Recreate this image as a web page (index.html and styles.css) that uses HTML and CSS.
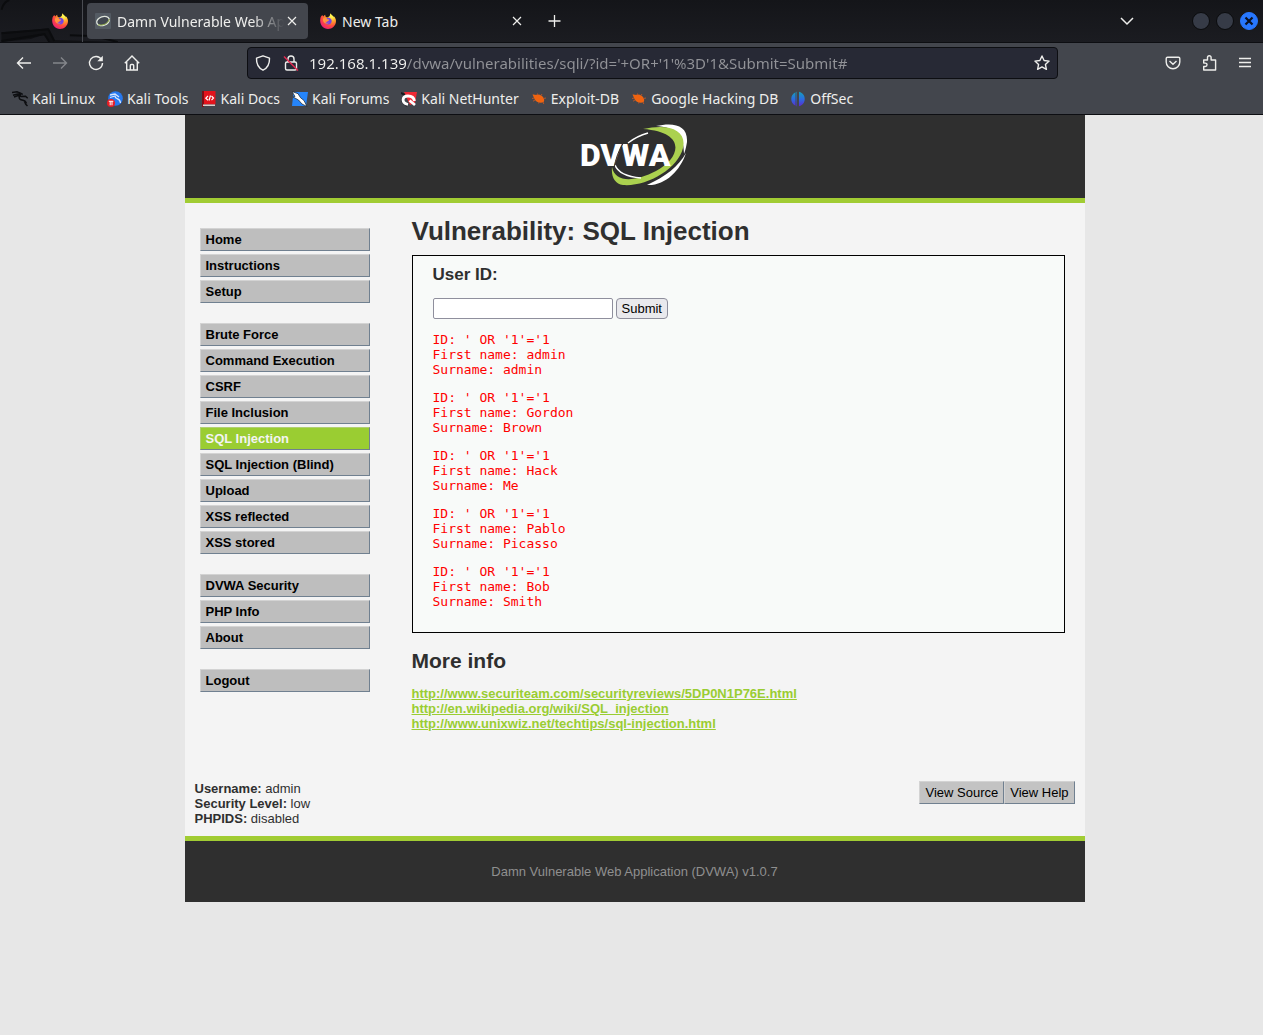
FILE: index.html
```html
<!DOCTYPE html>
<html lang="en">
<head>
<meta charset="utf-8">
<title>Damn Vulnerable Web App (DVWA) v1.0.7 :: Vulnerability: SQL Injection</title>
<link rel="stylesheet" href="styles.css">
</head>
<body>
<svg class="defs" aria-hidden="true">
  <defs>
    <radialGradient id="flame" cx="0.75" cy="0.15" r="1">
      <stop offset="0.1" stop-color="#fff44f"/><stop offset="0.35" stop-color="#ffa62b"/><stop offset="0.65" stop-color="#ff4a3d"/><stop offset="1" stop-color="#e31587"/>
    </radialGradient>
    <linearGradient id="offsec" x1="0" y1="0" x2="0" y2="1">
      <stop offset="0" stop-color="#159fb8"/><stop offset="0.5" stop-color="#2a6de0"/><stop offset="1" stop-color="#5b2bd0"/>
    </linearGradient>
    <symbol id="firefox" viewBox="0 0 16 16">
      <path fill="url(#flame)" d="M15.3 5.2c-.4-.9-1.100-1.700-1.700-2 .4.700.5 1.300.5 1.300C13.200 2.200 11.200 2 10.300.2c-.4 1-.2 1.900-.6 2.700-.8.5-1.500 1-1.900 1.500-.8-.2-1.600-.1-1.600-.1-.8-.7-1.100-1.700-1-2.600-.8.400-1.500 1.100-1.900 1.700-.5-.2-.8-.9-.9-1.400C1.300 2.700.5 4 .3 5.900-.6 11 2.800 16 8 16c4.300 0 8-3.400 8-8 0-1-.3-2-.7-2.800z"/>
      <path fill="#7543e5" d="M8.200 4.700c2 0 3.500 1.500 3.500 3.400s-1.500 3.400-3.500 3.400c-1.900 0-3.400-1.300-3.600-3 1.400 1 2.900.6 3.400-.4.700-.4 1.200-.5 1.100-1-.3-.5-1.200-.2-1.900-.6C6.400 6 6.600 5 8.200 4.700z"/>
      <path fill="#ff9640" d="M3 5.500c1-.8 2.500-.7 3.300-.1.300.7 1 .9 2.100.9.500.1-.1.900-.9 1.200-.5.900-1.300 1.500-2.600 1.100 1 1.400 3 1.700 4.400.7-1.200 1.700-4.300 1.600-5.600-.3C3 8 2.700 6.700 3 5.500z"/>
    </symbol>
    <symbol id="close" viewBox="0 0 10 10"><path d="M1 1l8 8M9 1l-8 8" stroke="currentColor" stroke-width="1.200" fill="none"/></symbol>
    <symbol id="dragon" viewBox="0 0 16 16">
      <path fill="none" stroke="currentColor" stroke-width="1.500" d="M0 1.500l5-.7 3.500 1.400 2.200 1.300M1 4.200l4.500-1.200 3.500.7M2 6l4-1.500 3 .8M7.500 4.500c-1 3.300.5 4.300 3.500 4.700 2.500.4 3 1.500 3.400 3.300M8.500 5.500l5-.2 2.200 2M12.500 10.500l1.300 2.800 1.700 1.700"/>
    </symbol>
    <symbol id="bug" viewBox="0 0 16 16">
      <path fill="#ef6310" d="M1.500 3.500c2.500 0 3 .7 4.500.2 3-.5 6 1.300 7 4.300.3 1.500.2 2.500-.8 3.300C9 12.300 4.500 11 3.500 8z"/>
      <path fill="none" stroke="#b4562a" d="M6 4l.5-1.500M10 4.500L11 3M12.500 7.500l2.500-.5M12 11l.8 2M8 11l-.3 1.500M4 9l-2 1.200M3 7L1 7.500"/>
    </symbol>
  </defs>
</svg>

<header class="browser">
  <div class="tabbar">
    <svg class="tabbar-art" viewBox="0 0 130 43" aria-hidden="true">
      <path fill="#101114" d="M0 33l30-2 18-2 6 12 66 2H50l-6-8-14 5-30 3z"/>
      <path fill="none" stroke="#0b0c0e" stroke-width="2" d="M0 34l48-4 6 12M0 42l44-7 5 8M70 36l25 1 24 6M0 10Q2 2 8 0"/>
    </svg>
    <button class="pinned" aria-label="Firefox View"><svg class="icon"><use href="#firefox"/></svg></button>
    <div class="tab tab-active">
      <svg class="icon" viewBox="0 0 16 16"><rect width="16" height="16" rx="1" fill="#545b63"/><ellipse cx="8" cy="8" rx="6.500" ry="4.300" transform="rotate(-18 8 8)" fill="#41474f" stroke="#dfe5dc" stroke-width="1.300"/><path d="M3 12q9 1 11.500-6" fill="none" stroke="#8ca646"/></svg>
      <span class="tab-title">Damn Vulnerable Web App</span>
      <button class="tab-close" aria-label="Close tab"><svg><use href="#close"/></svg></button>
    </div>
    <div class="tab">
      <svg class="icon"><use href="#firefox"/></svg>
      <span class="tab-title">New Tab</span>
      <button class="tab-close" aria-label="Close tab"><svg><use href="#close"/></svg></button>
    </div>
    <button class="new-tab" aria-label="New tab"><svg class="icon" viewBox="0 0 16 16"><path d="M7.500 2v12M1.500 8h12" stroke="currentColor" stroke-width="1.300"/></svg></button>
    <div class="window-controls">
      <button class="list-tabs" aria-label="List all tabs"><svg class="icon" viewBox="0 0 16 16"><path d="M2 5l6 6 6-6" fill="none" stroke="currentColor" stroke-width="1.500"/></svg></button>
      <button class="dot" aria-label="Minimize"></button>
      <button class="dot" aria-label="Maximize"></button>
      <button class="dot dot-close" aria-label="Close"><svg viewBox="0 0 10 10"><path d="M1.500 1.500l7 7M8.500 1.500l-7 7" stroke="#0b1020" stroke-width="2.200"/></svg></button>
    </div>
  </div>

  <div class="toolbar">
    <nav class="tools" aria-label="Navigation">
      <button aria-label="Back"><svg class="icon" viewBox="0 0 16 16"><path d="M15 8H1.500M7 2.500L1.500 8 7 13.500" fill="none" stroke="currentColor" stroke-width="1.400"/></svg></button>
      <button class="disabled" aria-label="Forward"><svg class="icon" viewBox="0 0 16 16"><path d="M1 8h13.500M9 2.500L14.500 8 9 13.500" fill="none" stroke="currentColor" stroke-width="1.400"/></svg></button>
      <button aria-label="Reload"><svg class="icon" viewBox="0 0 16 16"><path d="M13.500 4.500A6.500 6.500 0 1 0 14.500 8" fill="none" stroke="currentColor" stroke-width="1.400"/><path d="M14.800.8v5.500H9.300z" fill="currentColor"/></svg></button>
      <button aria-label="Home"><svg class="icon" viewBox="0 0 16 16"><path d="M.8 8.200L8 1l7.200 7.200M2.700 7v8h10.600V7M6.300 15v-4.500q0-1 1-1h1.400q1 0 1 1V15" fill="none" stroke="currentColor" stroke-width="1.400"/></svg></button>
    </nav>
    <div class="urlbar">
      <svg class="icon" viewBox="0 0 16 16"><path d="M8 .8L14.500 3.200c.2 5-1.500 9.500-6.500 12C3 12.700 1.300 8.200 1.500 3.200z" fill="none" stroke="currentColor" stroke-width="1.400" stroke-linejoin="round"/></svg>
      <svg class="icon" viewBox="0 0 16 16"><path d="M5 7V4a3 3 0 0 1 6 0v3M4 7h8q1.500 0 1.500 1.500v5Q13.500 15 12 15H4q-1.500 0-1.500-1.500v-5Q2.500 7 4 7z" fill="none" stroke="currentColor" stroke-width="1.400"/><path d="M1 1.500l14 14" stroke="#e22850" stroke-width="1.500"/></svg>
      <input class="url" aria-label="Address" value="192.168.1.139/dvwa/vulnerabilities/sqli/?id='+OR+'1'%3D'1&amp;Submit=Submit#">
      <svg class="icon" viewBox="0 0 16 16"><path d="M8 1l2.100 4.500 5 .6-3.700 3.300 1 4.900L8 11.900l-4.400 2.400 1-4.900L.9 6.100l5-.6z" fill="none" stroke="currentColor" stroke-width="1.400" stroke-linejoin="round"/></svg>
    </div>
    <div class="tools">
      <button aria-label="Save to Pocket"><svg class="icon" viewBox="0 0 16 16"><path d="M2.500 2.200h11q1.300 0 1.300 1.300V7a6.800 6.800 0 0 1-13.600 0V3.500q0-1.300 1.300-1.300zM4.500 6L8 9.300 11.500 6" fill="none" stroke="currentColor" stroke-width="1.400"/></svg></button>
      <button aria-label="Extensions"><svg class="icon" viewBox="0 0 16 16"><path d="M2.700 5h3.800V2.500a1.800 1.800 0 0 1 3.600 0V5h4.500v10H2.700v-3.500h1.600a1.700 1.700 0 0 0 0-3.400H2.700z" fill="none" stroke="currentColor" stroke-width="1.400" stroke-linejoin="round"/></svg></button>
      <button aria-label="Menu"><svg class="icon" viewBox="0 0 16 16"><path d="M2 3.500h12M2 7.500h12M2 11.500h12" stroke="currentColor" stroke-width="1.300"/></svg></button>
    </div>
  </div>

  <nav class="bookmarks" aria-label="Bookmarks">
    <a href="#"><svg class="icon kali"><use href="#dragon"/></svg>Kali Linux</a>
    <a href="#"><svg class="icon" viewBox="0 0 16 16"><circle cx="8.500" cy="7.500" r="7.300" fill="#2678ef"/><path d="M3 4l5-1 4 3M3 6.500l5-1.500c0 4 5 1 5.500 7" fill="none" stroke="#d5e5ff" stroke-width="1.300"/><circle cx="4" cy="12" r="4" fill="#e81c24"/><path d="M1.800 10.300h4.500M3.200 10.300v4M5 10.300v4" stroke="#fff" fill="none"/></svg>Kali Tools</a>
    <a href="#"><svg class="icon" viewBox="0 0 16 16"><path fill="#7d0d14" d="M1 0h2v16H1z"/><path fill="#e3131c" d="M3 0h11.500v13.500H3z"/><path fill="#d7d0cc" d="M2 13.500h12v1.500H2z"/><path d="M7 5L4.800 7.200 7 9.200M10.500 5l2 2-2 2.200M9.500 4.500l-1.500 5" fill="none" stroke="#fff" stroke-width="1.200"/></svg>Kali Docs</a>
    <a href="#"><svg class="icon" viewBox="0 0 16 16"><path fill="#2685fa" d="M1.500 1H16l-2 14H0z"/><path d="M0 .5l6 2.200 2.500 4 3.500 2.800 3 6-5-2.500-3.500-4L1 6l2-.5z" fill="#fff" stroke="#17212a" stroke-width=".7"/></svg>Kali Forums</a>
    <a href="#"><svg class="icon" viewBox="0 0 16 16"><path fill="#ef2934" d="M3 1h13l-2 11-5 2z"/><path d="M0 2l4 2M1 10l5 5" stroke="#17191d" stroke-width="2"/><path d="M14 14L8.500 9.500M7 13.500C0 12 1 5 7 5c4 0 6 2 6.500 5" fill="none" stroke="#fff" stroke-width="2.800"/></svg>Kali NetHunter</a>
    <a href="#"><svg class="icon"><use href="#bug"/></svg>Exploit-DB</a>
    <a href="#"><svg class="icon"><use href="#bug"/></svg>Google Hacking DB</a>
    <a href="#"><svg class="icon" viewBox="0 0 16 16"><path fill="url(#offsec)" d="M7 .8v14.400h-.5V1h-1v13.700A7.500 7.500 0 0 1 5.500 1.200L7 .8zM9 .8v14.400l1.500-.5a7.500 7.500 0 0 0 0-13.500z"/></svg>OffSec</a>
  </nav>
</header>

<div class="page">
  <div class="container">
    <header class="banner">
      <svg class="logo" viewBox="0 0 108 62" role="img" aria-label="DVWA">
        <path fill="#fff" d="M75 2C93-2 107 1 106 18c-1 6-2 9-3 12C103 10 93 3 75 2zM105 29C99 47 84 62 66 61 84 53 98 42 105 29z"/>
        <path fill="#abd14f" d="M62 5C88-1 106 6 102 24 97 45 65 63 42 61 34 60 30 53 31 43 34 59 54 58 75 47 100 34 106 8 62 5z"/>
        <path fill="none" stroke="#fff" stroke-width="1.500" d="M67 9Q56 12 47 19M34 41Q38 52 60 54"/>
        <text class="logo-text" x="-1" y="42">DVWA</text>
        <path d="M43 18Q35 30 33 45" fill="none" stroke="#2f2f2f"/>
      </svg>
    </header>

    <div class="columns">
      <nav class="menu" aria-label="Main menu">
        <ul>
          <li><a href="#">Home</a></li>
          <li><a href="#">Instructions</a></li>
          <li><a href="#">Setup</a></li>
        </ul>
        <ul>
          <li><a href="#">Brute Force</a></li>
          <li><a href="#">Command Execution</a></li>
          <li><a href="#">CSRF</a></li>
          <li><a href="#">File Inclusion</a></li>
          <li><a class="selected" href="#">SQL Injection</a></li>
          <li><a href="#">SQL Injection (Blind)</a></li>
          <li><a href="#">Upload</a></li>
          <li><a href="#">XSS reflected</a></li>
          <li><a href="#">XSS stored</a></li>
        </ul>
        <ul>
          <li><a href="#">DVWA Security</a></li>
          <li><a href="#">PHP Info</a></li>
          <li><a href="#">About</a></li>
        </ul>
        <ul>
          <li><a href="#">Logout</a></li>
        </ul>
      </nav>

      <main class="content">
        <h1>Vulnerability: SQL Injection</h1>
        <section class="vulnerable">
          <form action="#" method="get">
            <h3><label for="user-id">User ID:</label></h3>
            <div class="field">
              <input type="text" id="user-id" name="id">
              <button type="submit" name="Submit">Submit</button>
            </div>
          </form>
          <pre>ID: ' OR '1'='1
First name: admin
Surname: admin</pre>
          <pre>ID: ' OR '1'='1
First name: Gordon
Surname: Brown</pre>
          <pre>ID: ' OR '1'='1
First name: Hack
Surname: Me</pre>
          <pre>ID: ' OR '1'='1
First name: Pablo
Surname: Picasso</pre>
          <pre>ID: ' OR '1'='1
First name: Bob
Surname: Smith</pre>
        </section>
        <h2>More info</h2>
        <ul class="links">
          <li><a href="#">http://www.securiteam.com/securityreviews/5DP0N1P76E.html</a></li>
          <li><a href="#">http://en.wikipedia.org/wiki/SQL_injection</a></li>
          <li><a href="#">http://www.unixwiz.net/techtips/sql-injection.html</a></li>
        </ul>
      </main>
    </div>

    <div class="system">
      <div>
        <div><b>Username:</b> admin</div>
        <div><b>Security Level:</b> low</div>
        <div><b>PHPIDS:</b> disabled</div>
      </div>
      <div class="system-buttons">
        <button>View Source</button>
        <button>View Help</button>
      </div>
    </div>

    <footer class="footer">Damn Vulnerable Web Application (DVWA) v1.0.7</footer>
  </div>
</div>
</body>
</html>
```
FILE: styles.css
```css
* { box-sizing: border-box; }

body {
  margin: 0;
  background: #e7e7e7;
  color: #2f2f2f;
  font: 13px/15px "Liberation Sans", Arial, sans-serif;
}

button, input { font: inherit; color: inherit; }
ul { list-style: none; margin: 0; padding: 0; }
.defs { position: absolute; width: 0; height: 0; }

/* Browser window */
.browser {
  background: #43464d;
  border-bottom: 1px solid #0d0e12;
  color: #eeeeec;
  font: 14px/20px "Noto Sans", sans-serif;
}
.browser button {
  display: flex;
  align-items: center;
  justify-content: center;
  padding: 0;
  border: 0;
  background: none;
}
.icon { display: block; flex: none; width: 16px; height: 16px; }

.tabbar {
  position: relative;
  display: flex;
  align-items: center;
  height: 43px;
  border-bottom: 1px solid #0d0e12;
  background: linear-gradient(#141519, #1b1c21);
}
.tabbar-art { position: absolute; left: 0; top: 0; width: 130px; height: 42px; }
.browser .pinned {
  position: relative;
  width: 83px;
  height: 42px;
  padding-left: 38px;
  border-right: 1px solid #4a4c52;
}
.tab {
  position: relative;
  display: flex;
  align-items: center;
  width: 221px;
  height: 36px;
  margin-left: 4px;
  padding: 0 8px;
  border-radius: 4px;
}
.tab-active { background: #43464d; }
.tab-title {
  flex: 1;
  min-width: 0;
  margin-left: 6px;
  padding-top: 2px;
  white-space: nowrap;
}
.tab-active .tab-title { -webkit-mask-image: linear-gradient(to left, transparent, #000 32px); mask-image: linear-gradient(to left, transparent, #000 32px); }
.tab-close { width: 16px; height: 16px; }
.tab-close svg { width: 10px; height: 10px; }
.new-tab { margin-left: 14px; }
.window-controls { display: flex; gap: 6px; align-items: center; margin-left: auto; padding-right: 5px; }
.browser .list-tabs { margin-right: 51px; }
.browser .dot {
  width: 18px;
  height: 18px;
  border: 1px solid #0a0b0d;
  border-radius: 50%;
  background: #363b47;
}
.browser .dot-close { border-color: #2777ff; background: #2777ff; }
.dot-close svg { width: 10px; height: 10px; }

.toolbar { display: flex; align-items: center; height: 40px; padding: 0 10px 0 16px; }
.tools { display: flex; gap: 20px; }
.browser .disabled { color: #84868b; }
.urlbar {
  flex: 1;
  display: flex;
  align-items: center;
  gap: 12px;
  height: 32px;
  margin: 0 107px;
  padding: 0 7px;
  border: 1px solid #0d0e12;
  border-radius: 4px;
  background: #272935;
}
.url {
  flex: 1;
  min-width: 0;
  margin-left: -2px;
  padding: 0;
  border: 0;
  background: linear-gradient(to right, #f2f2f0 98px, #929398 98px);
  -webkit-background-clip: text;
  background-clip: text;
  color: transparent;
  font-size: 15px;
}

.bookmarks { display: flex; gap: 12px; height: 31px; padding: 0 12px; align-items: center; }
.bookmarks a { display: flex; align-items: center; gap: 4px; color: inherit; text-decoration: none; white-space: nowrap; }
.kali { color: #0d0e11; }

/* Web page */
.page { padding-left: 6px; }
.container { max-width: 900px; margin: 0 auto; background: #f4f4f4; }
.banner {
  padding: 9px 0 12px;
  border-bottom: 5px solid #a1cc33;
  background: #2f2f2f;
}
.logo { display: block; width: 108px; height: 62px; margin: 0 auto; }
.logo-text { fill: #fff; font: 900 32px Roboto, sans-serif; }

.columns { display: flex; gap: 42px; padding: 13px 20px 50px 15px; }
.menu { flex: none; width: 170px; padding-top: 12px; }
.menu ul { display: grid; gap: 3px; margin-bottom: 20px; }
.menu a {
  display: block;
  padding: 3px 5px;
  border: 1px solid;
  border-color: #d3d3d3 #708090 #708090 #d3d3d3;
  background: #bebebe;
  color: #000;
  font-weight: bold;
  text-decoration: none;
}
.menu .selected { background: #9acd32; color: #f4f4f4; border-color: #b0cf70 #708090 #708090 #b0cf70; }

.content { flex: 1; min-width: 0; }
h1 { margin: 0 0 9px; font-size: 26px; line-height: 30px; }
h2 { margin: 17px 0 14px; font-size: 21px; line-height: 22px; }
h3 { margin: 0 0 14px; font-size: 17px; line-height: 19px; }
.vulnerable { padding: 9px 20px 23px; border: 1px solid #000; background: #f8faf9; }
.field { display: flex; gap: 3px; }
.field input {
  width: 180px;
  height: 21px;
  border: 1px solid #8f8f9d;
  border-radius: 2px;
  background: #fff;
}
.field button {
  height: 21px;
  padding: 0 5px;
  border: 1px solid #8f8f9d;
  border-radius: 4px;
  background: #e9e9ed;
  color: #000;
}
pre { margin: 13px 0 0; color: #f00; font: 13px/15px "DejaVu Sans Mono", monospace; }
.links a { color: #9acd32; font-weight: bold; }

.system { display: flex; justify-content: space-between; align-items: flex-start; padding: 0 10px 10px; }
.system-buttons { display: flex; }
.system-buttons button {
  padding: 3px 5px;
  border: 1px solid;
  border-color: #d3d3d3 #708090 #708090 #d3d3d3;
  background: #c3c3c3;
  color: #000;
}
.footer {
  padding: 23px 0;
  border-top: 5px solid #a1cc33;
  background: #2f2f2f;
  color: #8f8f8f;
  text-align: center;
}
```
